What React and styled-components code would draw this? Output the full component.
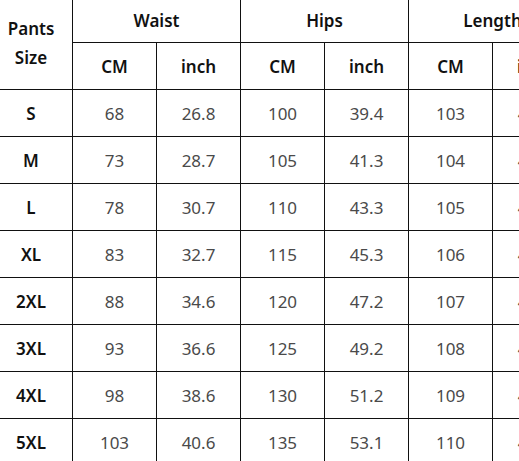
import React from "react"
import styled, { createGlobalStyle } from "styled-components"

const Global = createGlobalStyle`
  html, body {
    margin: 0;
    padding: 0;
    background: #fff;
    overflow: hidden;
  }
  body {
    font-family: "Noto Sans", "Open Sans", sans-serif;
  }
`

const Chart = styled.div`
  display: grid;
  grid-template-columns: 83px repeat(6, 84px);
  grid-template-rows: 45px 47px repeat(8, 47px);
  width: max-content;
  margin: -2px 0 0 -10px;
`

const Cell = styled.div`
  box-sizing: border-box;
  display: flex;
  align-items: center;
  justify-content: center;
  border-right: 1px solid #111;
  border-bottom: 1px solid #111;
  font-size: 17px;
  color: ${(p) => (p.$head ? "#111" : "#4a4a4a")};
  font-weight: ${(p) => (p.$head ? 600 : 400)};
  grid-column: ${(p) => (p.$span ? `span ${p.$span}` : "auto")};
  grid-row: ${(p) => (p.$rows ? `span ${p.$rows}` : "auto")};
  padding-bottom: ${(p) => (p.$rows ? "2px" : "0")};
  text-align: center;
  line-height: 29px;
  white-space: nowrap;
`

const groups = ["Waist", "Hips", "Length"]

const rows = [
  ["S", 68, "26.8", 100, "39.4", 103, "40.6"],
  ["M", 73, "28.7", 105, "41.3", 104, "40.9"],
  ["L", 78, "30.7", 110, "43.3", 105, "41.3"],
  ["XL", 83, "32.7", 115, "45.3", 106, "41.7"],
  ["2XL", 88, "34.6", 120, "47.2", 107, "42.1"],
  ["3XL", 93, "36.6", 125, "49.2", 108, "42.5"],
  ["4XL", 98, "38.6", 130, "51.2", 109, "42.9"],
  ["5XL", 103, "40.6", 135, "53.1", 110, "43.3"],
]

export default function App() {
  return (
    <>
      <Global />
      <Chart>
        <Cell $head $rows={2}>
          Pants
          <br />
          Size
        </Cell>
        {groups.map((g) => (
          <Cell key={g} $head $span={2}>
            {g}
          </Cell>
        ))}
        {groups.map((g) => (
          <React.Fragment key={g}>
            <Cell $head>CM</Cell>
            <Cell $head>inch</Cell>
          </React.Fragment>
        ))}
        {rows.map((r) =>
          r.map((v, i) => (
            <Cell key={r[0] + i} $head={i === 0}>
              {v}
            </Cell>
          ))
        )}
      </Chart>
    </>
  )
}
